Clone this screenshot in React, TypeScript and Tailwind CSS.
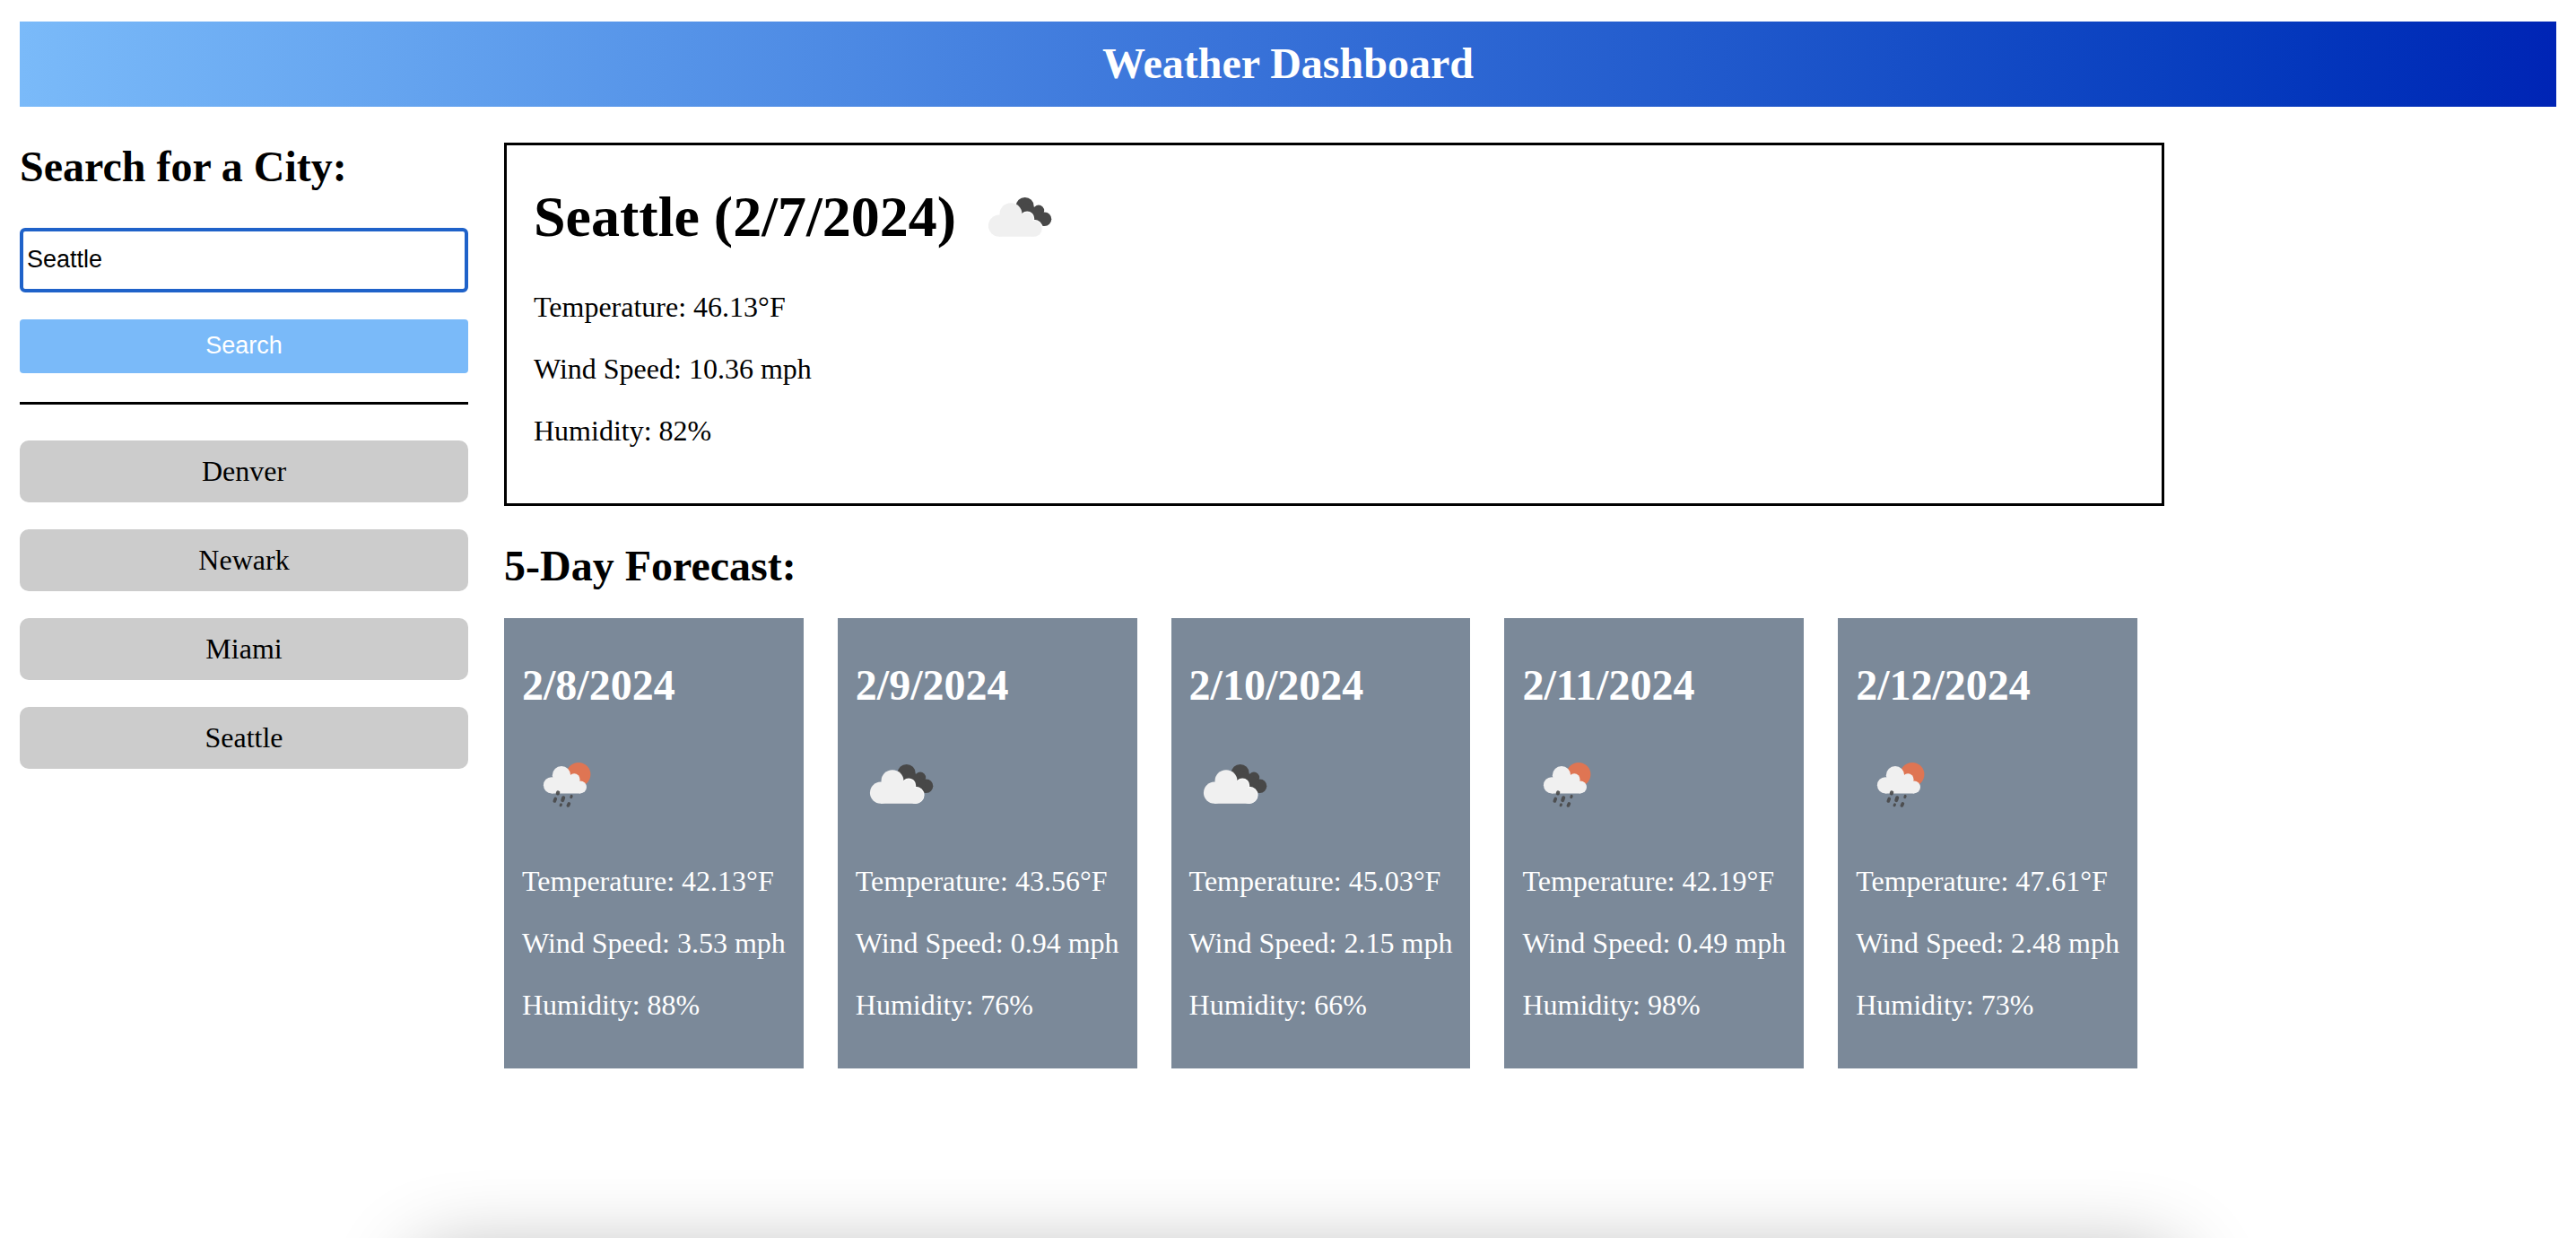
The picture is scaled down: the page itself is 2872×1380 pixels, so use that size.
import { useState } from "react";

type Sky = "clouds" | "rain";

interface Reading {
  date: string;
  sky: Sky;
  temperature: string;
  wind: string;
  humidity: string;
}

const today: Reading = {
  date: "2/7/2024",
  sky: "clouds",
  temperature: "46.13",
  wind: "10.36",
  humidity: "82",
};

const forecast: Reading[] = [
  { date: "2/8/2024", sky: "rain", temperature: "42.13", wind: "3.53", humidity: "88" },
  { date: "2/9/2024", sky: "clouds", temperature: "43.56", wind: "0.94", humidity: "76" },
  { date: "2/10/2024", sky: "clouds", temperature: "45.03", wind: "2.15", humidity: "66" },
  { date: "2/11/2024", sky: "rain", temperature: "42.19", wind: "0.49", humidity: "98" },
  { date: "2/12/2024", sky: "rain", temperature: "47.61", wind: "2.48", humidity: "73" },
];

const history = ["Denver", "Newark", "Miami", "Seattle"];

function CloudsIcon() {
  return (
    <svg viewBox="0 0 100 100" className="size-[100px] shrink-0" role="img" aria-label="Broken clouds">
      <g fill="#484848">
        <circle cx="56.7" cy="37.9" r="10" />
        <circle cx="72" cy="42.8" r="6.2" />
        <circle cx="78.6" cy="52.2" r="7.7" />
        <path d="M49 40 L58 34 L66.5 38.5 L77 46 L78 59.9 L68 57 Z" />
      </g>
      <g fill="#f0f0f0">
        <g stroke="#fbfbfb" strokeWidth="1.6">
          <circle cx="59.2" cy="51.4" r="7.2" />
          <circle cx="67" cy="62.3" r="8.8" />
        </g>
        <circle cx="28" cy="59.7" r="12.1" />
        <circle cx="41" cy="46.7" r="12.5" />
        <circle cx="58.6" cy="52.3" r="7" />
        <circle cx="66.6" cy="62.9" r="8.9" />
        <path d="M28 52 L41 48 L57 51 L66 60 L66.6 71.8 L28 71.8 Z" />
      </g>
    </svg>
  );
}

function RainIcon() {
  return (
    <svg viewBox="0 0 100 100" className="size-[100px] shrink-0" role="img" aria-label="Rain">
      <circle cx="63" cy="39.3" r="13.4" fill="#df7553" />
      <g fill="#f0f0f0">
        <circle cx="33" cy="51.3" r="9.1" />
        <circle cx="44" cy="40.2" r="10.2" />
        <circle cx="58.2" cy="44.7" r="6.4" />
        <circle cx="65" cy="53.4" r="7" />
        <path d="M33 45 L44 40 L57 45 L65 51 L65 60.4 L33 60.4 Z" />
      </g>
      <g stroke="#484848" strokeLinecap="round" strokeOpacity="0.9" strokeWidth="3.6">
        <path d="M40.2 59.4 L39.8 60.4" strokeWidth="4.2" />
        <path d="M37.3 66.4 L36.3 69" />
        <path d="M46.2 65.2 L45.2 68.2" strokeWidth="4" />
        <path d="M55.2 63.4 L54.8 64.6" strokeWidth="3" />
        <path d="M43.5 72.8 L43.1 73.8" strokeWidth="3" />
        <path d="M52.4 71.8 L51.4 74" />
      </g>
    </svg>
  );
}

function SkyIcon({ sky }: { sky: Sky }) {
  return sky === "rain" ? <RainIcon /> : <CloudsIcon />;
}

function Details({ reading }: { reading: Reading }) {
  return (
    <div className="flex flex-col gap-8 py-8">
      <p>Temperature: {reading.temperature}°F</p>
      <p>Wind Speed: {reading.wind} mph</p>
      <p>Humidity: {reading.humidity}%</p>
    </div>
  );
}

function ForecastCard({ reading }: { reading: Reading }) {
  return (
    <li className="bg-[#7b8999] px-5 pt-12 pb-5 text-white">
      <h3 className="mb-[34px] text-5xl leading-[53px] font-bold">{reading.date}</h3>
      <SkyIcon sky={reading.sky} />
      <div className="mt-2">
        <Details reading={reading} />
      </div>
    </li>
  );
}

export default function App() {
  const [city, setCity] = useState("Seattle");

  return (
    <div className="min-h-screen bg-white px-[22px] pt-6 font-['Liberation_Serif',serif] text-[32px] leading-[37px] text-black">
      <header className="bg-linear-to-r from-[#7abaf9] via-[#3b75da] via-46% to-[#0024b5] px-5 pt-5 pb-[22px]">
        <h1 className="text-center text-5xl leading-[53px] font-bold text-white">Weather Dashboard</h1>
      </header>

      <div className="mt-10 flex items-start gap-10">
        <aside className="w-[500px] shrink-0">
          <form onSubmit={(event) => event.preventDefault()}>
            <label htmlFor="city" className="block text-5xl leading-[53px] font-bold">
              Search for a City:
            </label>
            <input
              id="city"
              type="text"
              value={city}
              onChange={(event) => setCity(event.target.value)}
              className="mt-[42px] block h-[72px] w-full rounded-md border-4 border-[#1f62c9] bg-white px-1 pb-0.5 font-['Liberation_Sans',sans-serif] text-[27px] outline-none"
            />
            <button
              type="submit"
              className="mt-[30px] block h-[60px] w-full rounded-sm bg-[#7abaf9] pb-0.5 font-['Liberation_Sans',sans-serif] text-[27px] text-white"
            >
              Search
            </button>
          </form>
          <hr className="mt-8 mb-10 border-t-3 border-black" />
          <ul className="flex flex-col gap-[30px]">
            {history.map((name) => (
              <li key={name}>
                <button
                  type="button"
                  onClick={() => setCity(name)}
                  className="block w-full rounded-[10px] bg-[#cccccc] py-4 text-center"
                >
                  {name}
                </button>
              </li>
            ))}
          </ul>
        </aside>

        <main className="max-w-[1851px] flex-1">
          <section className="border-3 border-black p-[30px]">
            <div className="flex items-center gap-5">
              <h2 className="text-[64px] leading-[74px] font-bold">Seattle ({today.date})</h2>
              <SkyIcon sky={today.sky} />
            </div>
            <Details reading={today} />
          </section>

          <section>
            <h2 className="mt-10 mb-8 text-5xl leading-[53px] font-bold">5-Day Forecast:</h2>
            <ul className="flex flex-wrap gap-[38px]">
              {forecast.map((reading) => (
                <ForecastCard key={reading.date} reading={reading} />
              ))}
            </ul>
          </section>
        </main>
      </div>

      <div className="pointer-events-none fixed top-full right-[440px] left-[460px] h-40 rounded-[40px] shadow-[0_18px_90px_rgba(0,0,0,0.3)]" />
    </div>
  );
}
